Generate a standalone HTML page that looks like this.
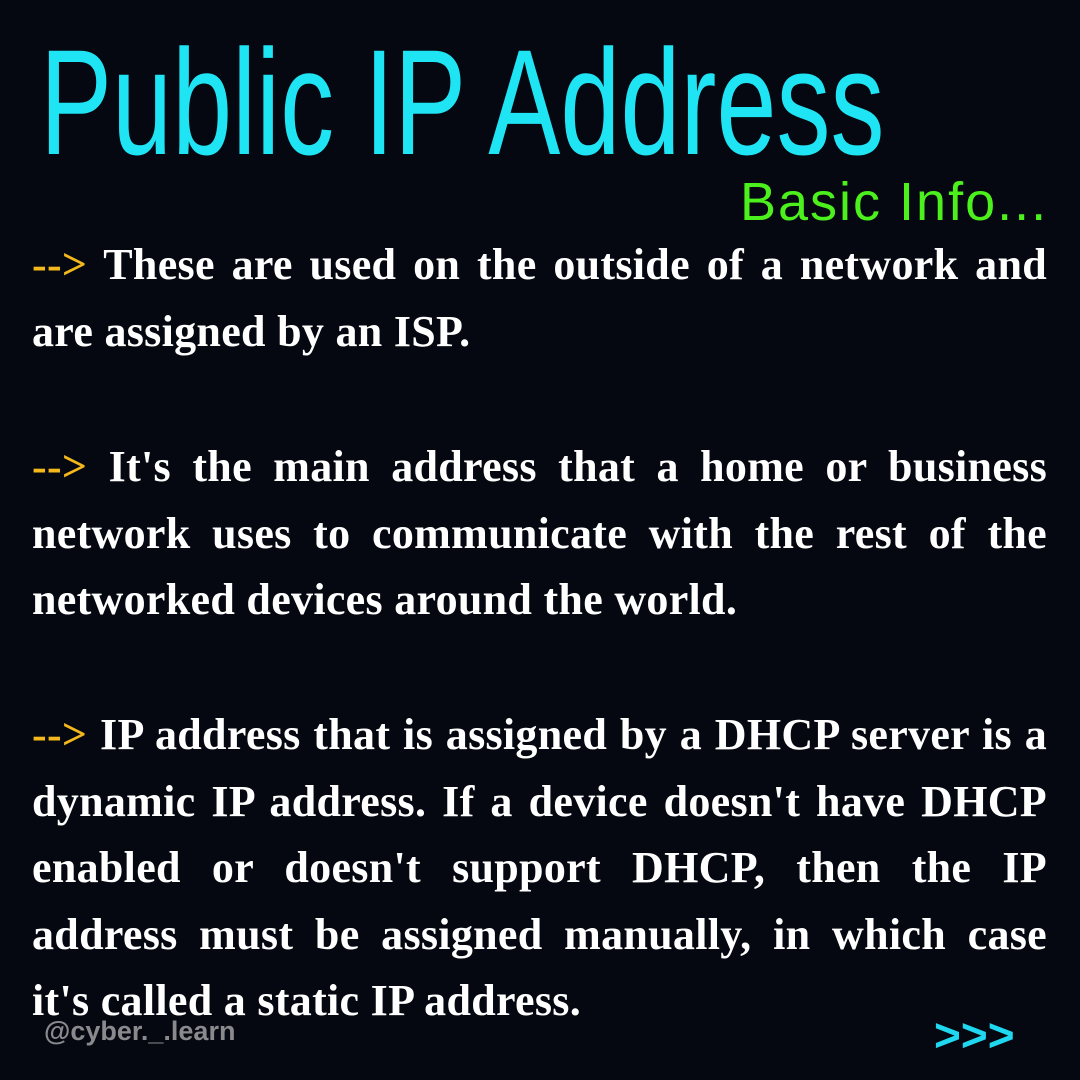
<!DOCTYPE html>
<html><head><meta charset="utf-8"><style>
html,body{margin:0;padding:0}
body{width:1080px;height:1080px;background:#050810;position:relative;overflow:hidden}
.t{position:absolute;left:40px;top:22px;font-family:"Liberation Sans Narrow","Liberation Sans",sans-serif;font-size:150px;line-height:160px;color:#1fe4f4;white-space:nowrap;transform:scaleX(0.72);transform-origin:left}
.b{position:absolute;left:740px;top:170px;font-family:"Liberation Sans Narrow","Liberation Sans",sans-serif;font-size:54px;line-height:64px;color:#4cf01c;letter-spacing:2px;white-space:nowrap}
.p{position:absolute;left:32px;width:1015px;font-family:"Liberation Serif",serif;font-weight:bold;font-size:44px;line-height:66.5px;color:#fff;text-align:justify;letter-spacing:0.3px}
.a{color:#f4b81c}
.w{position:absolute;left:44px;top:1016px;font-family:"Liberation Sans",sans-serif;font-weight:bold;font-size:27px;color:#8a8a8e}
.n{position:absolute;left:934px;top:1008px;font-family:"Liberation Sans",sans-serif;font-weight:bold;font-size:46px;color:#1fd8f0;letter-spacing:0px}
</style></head><body>
<div class="t">Public IP Address</div>
<div class="b">Basic Info...</div>
<div class="p" style="top:232px"><span class="a">--&gt;</span> These are used on the outside of a network and are assigned by an ISP.</div>
<div class="p" style="top:434px"><span class="a">--&gt;</span> It's the main address that a home or business network uses to communicate with the rest of the networked devices around the world.</div>
<div class="p" style="top:702px"><span class="a">--&gt;</span> IP address that is assigned by a DHCP server is a dynamic IP address. If a device doesn't have DHCP enabled or doesn't support DHCP, then the IP address must be assigned manually, in which case it's&nbsp;called a static IP address.</div>
<div class="w">@cyber._.learn</div>
<div class="n">&gt;&gt;&gt;</div>
</body></html>
